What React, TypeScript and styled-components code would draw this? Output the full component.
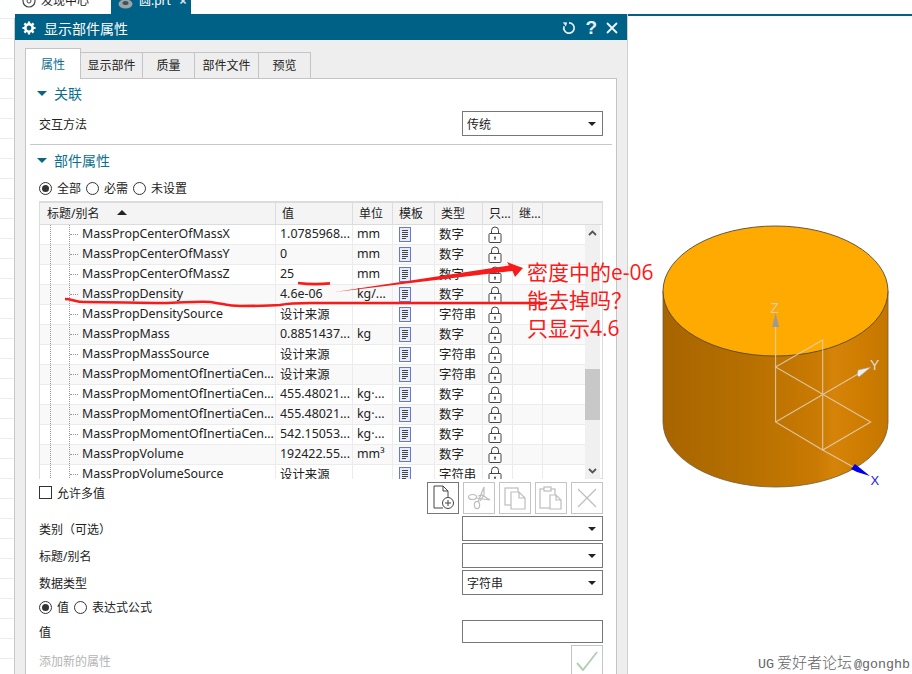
import React from 'react';
import styled, { createGlobalStyle } from 'styled-components';

const BLUE = '#006187';
const FONT = '"Noto Sans", "Noto Sans CJK SC", sans-serif';

const GlobalStyle = createGlobalStyle`
  html, body { margin: 0; padding: 0; background: #fff; }
  body { font-family: ${FONT}; font-size: 12px; color: #222; }
`;

const Page = styled.div`
  position: relative;
  width: 912px;
  height: 674px;
  overflow: hidden;
  display: flex;
  flex-direction: column;
  background: #fff;
`;

const TopBar = styled.div`
  height: 14px;
  flex: none;
  display: flex;
  align-items: flex-end;
  padding-left: 15px;
  overflow: hidden;
`;

const TopTab = styled.div<{ $active?: boolean }>`
  width: ${p => (p.$active ? 80 : 96)}px;
  height: 14px;
  flex: none;
  display: flex;
  align-items: flex-end;
  gap: ${p => (p.$active ? 6 : 5)}px;
  box-sizing: border-box;
  padding: 0 0 5px ${p => (p.$active ? 7 : 6)}px;
  font-size: 12px;
  line-height: 16px;
  color: ${p => (p.$active ? '#fff' : '#222')};
  background: ${p => (p.$active ? BLUE : '#fff')};
  white-space: nowrap;
  svg { flex: none; }
`;

const TabClose = styled.span`
  margin-left: 2px;
  font-size: 14px;
  font-weight: 700;
  color: #d8dfe4;
`;

const Workspace = styled.div`
  flex: 1;
  display: flex;
  min-height: 0;
`;

const LeftStrip = styled.div`
  width: 14px;
  flex: none;
  border-right: 1px solid #c8c8c8;
  margin-top: 4px;
  background: repeating-linear-gradient(to bottom, #ececec 0, #ececec 1px, #fff 1px, #fff 20px);
`;

const Dialog = styled.div`
  width: 612px;
  flex: none;
  background: #eee;
  border-right: 1px solid #d0d0d0;
  display: flex;
  flex-direction: column;
`;

const TitleBar = styled.div`
  height: 26px;
  flex: none;
  box-sizing: border-box;
  display: flex;
  align-items: center;
  padding: 1px 9px 0 7px;
  background: ${BLUE};
  color: #fff;
  font-size: 14px;
`;

const TitleText = styled.span`
  margin-left: 8px;
  flex: 1;
`;

const TitleTools = styled.div`
  display: flex;
  align-items: center;
  gap: 9px;
`;

const HelpMark = styled.span`
  font: 700 19px/20px "Liberation Sans", sans-serif;
  color: #e8f0f4;
`;

const DialogBody = styled.div`
  padding: 8px 10px 0;
  flex: 1;
  min-height: 0;
`;

const TabRow = styled.div`
  display: flex;
  align-items: flex-end;
  height: 31px;
  position: relative;
  z-index: 1;
`;

const Tab = styled.div<{ $active?: boolean; $w: number }>`
  width: ${p => p.$w}px;
  height: ${p => (p.$active ? 31 : 27)}px;
  box-sizing: border-box;
  display: flex;
  align-items: center;
  justify-content: center;
  border: 1px solid #c4c4c4;
  border-left-width: ${p => (p.$active ? 1 : 0)}px;
  border-bottom-width: ${p => (p.$active ? 0 : 1)}px;
  background: ${p => (p.$active ? '#fff' : '#eee')};
  color: ${p => (p.$active ? '#0a6f8e' : '#222')};
  padding-bottom: ${p => (p.$active ? 1 : 2)}px;
`;

const Panel = styled.div`
  margin-top: -1px;
  height: 640px;
  box-sizing: border-box;
  border: 1px solid #c4c4c4;
  background: #fff;
  padding: 5px 13px 0;
`;

const SectionHead = styled.div<{ $gap?: number }>`
  height: 20px;
  box-sizing: border-box;
  padding-bottom: 2px;
  margin-top: ${p => p.$gap ?? 0}px;
  display: flex;
  align-items: center;
  gap: 7px;
  font-size: 14px;
  color: #0a6f8e;
  &::before {
    content: "";
    margin-left: -2px;
    width: 0;
    height: 0;
    border-left: 5px solid transparent;
    border-right: 5px solid transparent;
    border-top: 5px solid #0a6580;
  }
`;

const FieldRow = styled.div<{ $gap: number; $h?: number }>`
  height: ${p => p.$h ?? 25}px;
  margin-top: ${p => p.$gap}px;
  display: flex;
  align-items: center;
  justify-content: space-between;
`;

const Select = styled.div`
  width: 141px;
  height: 25px;
  box-sizing: border-box;
  border: 1px solid #777;
  background: #fff;
  display: flex;
  align-items: center;
  padding: 0 6px 0 4px;
  &::after {
    content: "";
    margin-left: auto;
    width: 0;
    height: 0;
    border-left: 4px solid transparent;
    border-right: 4px solid transparent;
    border-top: 4px solid #222;
  }
`;

const TextInput = styled.div`
  width: 141px;
  height: 23px;
  box-sizing: border-box;
  border: 1px solid #777;
  background: #fff;
`;

const Divider = styled.div`
  height: 1px;
  margin: 8px -9px 0;
  background: #c8c8c8;
`;

const RadioRow = styled.div<{ $gap: number }>`
  height: 20px;
  margin-top: ${p => p.$gap}px;
  display: flex;
  align-items: center;
  gap: 5px;
`;

const Radio = styled.span<{ $on?: boolean }>`
  width: 13px;
  height: 13px;
  box-sizing: border-box;
  border-radius: 50%;
  border: 1px solid #333;
  display: inline-flex;
  align-items: center;
  justify-content: center;
  &::after {
    content: "";
    width: 7px;
    height: 7px;
    border-radius: 50%;
    background: ${p => (p.$on ? '#333' : 'transparent')};
  }
`;

const Table = styled.div`
  margin-top: 3px;
  height: 278px;
  box-sizing: border-box;
  border: 1px solid #dcdcdc;
  border-top-width: 2px;
  display: flex;
  flex-direction: column;
`;

const COLS = '236px 77px 40px 42px 48px 30px 30px';

const HeaderRow = styled.div`
  height: 22px;
  flex: none;
  box-sizing: border-box;
  display: grid;
  grid-template-columns: ${COLS} 1fr;
  border-bottom: 1px solid #dcdcdc;
  background: #f4f4f4;
`;

const HeaderCell = styled.div<{ $pad?: number }>`
  display: flex;
  align-items: center;
  gap: 18px;
  padding: 0 0 2px ${p => p.$pad ?? 6}px;
  border-right: 1px solid #dcdcdc;
  &:last-child { border-right: 0; }
`;

const SortArrow = styled.span`
  width: 0;
  height: 0;
  border-left: 5px solid transparent;
  border-right: 5px solid transparent;
  border-bottom: 5px solid #222;
`;

const TableBody = styled.div`
  height: 254px;
  flex: none;
  display: flex;
  overflow: hidden;
`;

const Rows = styled.div`
  width: 545px;
  flex: none;
`;

const Row = styled.div<{ $alt: boolean }>`
  height: 20px;
  box-sizing: border-box;
  display: grid;
  grid-template-columns: ${COLS};
  border-bottom: 1px solid #ececec;
  background: ${p => (p.$alt ? '#f9f9f9' : '#fff')};
`;

const Cell = styled.div<{ $pad?: number }>`
  padding: 0 0 2px ${p => p.$pad ?? 4}px;
  border-right: 1px solid #ececec;
  display: flex;
  align-items: center;
  overflow: hidden;
  white-space: nowrap;
  font-size: 12.4px;
`;

const IconCell = styled(Cell)`
  padding-bottom: 0;
`;

const TreeCell = styled(Cell)`
  position: relative;
  padding-left: 42px;
  &::before {
    content: "";
    position: absolute;
    left: 10px;
    top: 0;
    bottom: 0;
    width: 18px;
    border-left: 1px dotted #999;
    border-right: 1px dotted #999;
  }
  &::after {
    content: "";
    position: absolute;
    left: 30px;
    top: 9px;
    width: 8px;
    border-top: 1px dotted #999;
  }
`;

const Scrollbar = styled.div`
  width: 15px;
  flex: none;
  background: #f0f0f0;
  display: flex;
  flex-direction: column;
  align-items: center;
  padding-top: 5px;
  box-sizing: border-box;
`;

const Thumb = styled.div`
  width: 15px;
  height: 51px;
  margin-top: 133px;
  background: #c8c8c8;
`;

const ScrollDown = styled.div`
  margin-top: 48px;
  display: flex;
`;

const ActionRow = styled.div`
  height: 32px;
  margin-top: 3px;
  display: flex;
  align-items: flex-start;
`;

const CheckBox = styled.span`
  width: 13px;
  height: 13px;
  margin: 4px 5px 0 0;
  box-sizing: border-box;
  border: 1px solid #333;
  background: #fff;
`;

const CheckLabel = styled.span`
  flex: 1;
  margin-top: 2px;
`;

const Tools = styled.div`
  display: flex;
  gap: 4px;
`;

const ToolButton = styled.div<{ $enabled?: boolean }>`
  width: 32px;
  height: 32px;
  box-sizing: border-box;
  border: 1px solid ${p => (p.$enabled ? '#777' : '#c4c4c4')};
  display: flex;
  align-items: center;
  justify-content: center;
`;

const DisabledLabel = styled.span`
  color: #b4b4b4;
`;

const ApplyButton = styled(ToolButton)`
  height: 31px;
`;

const Viewport = styled.div`
  flex: 1;
  border-top: 2px solid ${BLUE};
`;

const Overlay = styled.svg`
  position: absolute;
  left: 0;
  top: 0;
  pointer-events: none;
`;

const Note = styled.div`
  position: absolute;
  left: 527px;
  top: 258px;
  font: 21px/28px "Open Sans", "Noto Sans CJK SC", sans-serif;
  color: #fb1a1a;
  white-space: nowrap;
`;

const Watermark = styled.div`
  position: absolute;
  left: 758px;
  top: 653px;
  font: 13.33px/18px "Liberation Mono", monospace;
  color: #666;
  white-space: nowrap;
`;

const WatermarkCjk = styled.span`
  margin: 0 2px 0 3px;
  font: 300 15px/18px "Noto Sans CJK SC", sans-serif;
`;

const rows = [
  ['MassPropCenterOfMassX', '1.0785968...', 'mm', '数字'],
  ['MassPropCenterOfMassY', '0', 'mm', '数字'],
  ['MassPropCenterOfMassZ', '25', 'mm', '数字'],
  ['MassPropDensity', '4.6e-06', 'kg/...', '数字'],
  ['MassPropDensitySource', '设计来源', '', '字符串'],
  ['MassPropMass', '0.8851437...', 'kg', '数字'],
  ['MassPropMassSource', '设计来源', '', '字符串'],
  ['MassPropMomentOfInertiaCen...', '设计来源', '', '字符串'],
  ['MassPropMomentOfInertiaCen...', '455.48021...', 'kg·...', '数字'],
  ['MassPropMomentOfInertiaCen...', '455.48021...', 'kg·...', '数字'],
  ['MassPropMomentOfInertiaCen...', '542.15053...', 'kg·...', '数字'],
  ['MassPropVolume', '192422.55...', 'mm³', '数字'],
  ['MassPropVolumeSource', '设计来源', '', '字符串'],
];

const DocIcon = () => (
  <svg width="12" height="15" viewBox="0 0 12 15">
    <rect x="0.5" y="0.5" width="11" height="14" fill="#e8ecff" stroke="#6277e0" />
    <path d="M3 3.5h6M3 5.5h6M3 7.5h6M3 9.5h6M3 11.5h4" stroke="#444" fill="none" />
  </svg>
);

const LockIcon = () => (
  <svg width="14" height="17" viewBox="0 0 14 17">
    <path d="M3.5 7V4.5a3.5 3.5 0 0 1 7 0V7" fill="none" stroke="#444" />
    <rect x="1" y="7.5" width="12" height="9" rx="1" fill="#fff" stroke="#444" />
    <circle cx="7" cy="11.5" r="1" fill="#444" />
    <path d="M7 12v2" stroke="#444" />
  </svg>
);

const Chevron = ({ up }: { up?: boolean }) => (
  <svg width="9" height="6" viewBox="0 0 9 6">
    <path d={up ? 'M1 5l3.5-3.5L8 5' : 'M1 1l3.5 3.5L8 1'} fill="none" stroke="#555" strokeWidth="1.8" />
  </svg>
);

const Gear = () => (
  <svg width="14" height="14" viewBox="0 0 14 14">
    <circle cx="7" cy="7" r="3.7" fill="none" stroke="#fff" strokeWidth="2.6" />
    <path d="M7 0.5v2.5M7 11v2.5M0.5 7h2.5M11 7h2.5M2.4 2.4l1.8 1.8M9.8 9.8l1.8 1.8M2.4 11.6l1.8-1.8M9.8 4.2l1.8-1.8" stroke="#fff" strokeWidth="2.2" />
  </svg>
);

const Reset = () => (
  <svg width="14" height="14" viewBox="0 0 14 14">
    <path d="M7 1.8a5.2 5.2 0 1 1-4.9 3.4" fill="none" stroke="#e8f0f4" strokeWidth="1.7" />
    <path d="M0.8 1.2l4.4 .2-1.3 4.2z" fill="#e8f0f4" />
  </svg>
);

const CloseX = () => (
  <svg width="12" height="12" viewBox="0 0 12 12">
    <path d="M1 1l10 10M11 1L1 11" stroke="#f0f5f8" strokeWidth="1.8" />
  </svg>
);

const NewIcon = () => (
  <svg width="24" height="26" viewBox="0 0 24 26">
    <path d="M12 23H3V1h9l5 5v7M12 1v5h5" fill="none" stroke="#444" />
    <circle cx="17" cy="18" r="5.5" fill="#fff" stroke="#444" />
    <path d="M17 15v6M14 18h6" stroke="#444" />
  </svg>
);

const CutIcon = () => (
  <svg width="24" height="24" viewBox="0 0 24 24">
    <g fill="none" stroke="#bdbdbd" strokeWidth="1.2">
      <ellipse cx="5.5" cy="11" rx="4" ry="2.5" />
      <ellipse cx="10" cy="19" rx="2.6" ry="3.6" />
      <path d="M11 16L17 1v8l-4 6" />
      <path d="M9 12l14 2-8-5-4 1" />
    </g>
  </svg>
);

const CopyIcon = () => (
  <svg width="24" height="24" viewBox="0 0 24 24">
    <g fill="#fff" stroke="#bdbdbd" strokeWidth="1.2">
      <rect x="2" y="2" width="13" height="17" />
      <path d="M8 6h8l6 6v11H8zM16 6v6h6" />
    </g>
  </svg>
);

const PasteIcon = () => (
  <svg width="24" height="26" viewBox="0 0 24 26">
    <g fill="#fff" stroke="#bdbdbd" strokeWidth="1.2">
      <rect x="1" y="4" width="15" height="19" />
      <rect x="5" y="2" width="7" height="4" />
      <path d="M11 10h6l5 5v9H11zM17 10v5h5" />
    </g>
  </svg>
);

const CrossIcon = () => (
  <svg width="20" height="20" viewBox="0 0 20 20">
    <path d="M1 1l18 18M19 1L1 19" stroke="#bdbdbd" strokeWidth="1.2" />
  </svg>
);

const CheckIcon = () => (
  <svg width="22" height="20" viewBox="0 0 22 20">
    <path d="M1 12l6 7L21 1" fill="none" stroke="#b4d0b4" strokeWidth="2" />
  </svg>
);

const Annotations = () => (
  <Overlay width="912" height="674" viewBox="0 0 912 674">
    <path d="M298 283c10 1.4 22 1.4 32 0.4" fill="none" stroke="#f61c1c" strokeWidth="2.6" />
    <path d="M65 299C72 299 76 302 84 302 110 302 140 303 163 303 180 303 198 301 210 302 220 303 228 306 240 306 255 306 270 306 280 305 290 303 296 303 310 303H547" fill="none" stroke="#f61c1c" strokeWidth="2.6" />
    <path d="M335 292L509 265.5 507 262 523 268 515 277 512.5 271z" fill="#f61c1c" />
  </Overlay>
);

const Model = () => (
  <Overlay width="912" height="674" viewBox="0 0 912 674">
    <defs>
      <linearGradient id="side" x1="0" x2="1" y1="0" y2="0">
        <stop offset="0" stopColor="#a86400" />
        <stop offset="0.35" stopColor="#b56f00" />
        <stop offset="0.68" stopColor="#c97a02" />
        <stop offset="0.76" stopColor="#d68409" />
        <stop offset="0.9" stopColor="#cd7c00" />
        <stop offset="1" stopColor="#c47600" />
      </linearGradient>
    </defs>
    <path d="M663 291v131a112.5 65 0 0 0 225 0V291z" fill="url(#side)" stroke="#6d5a3c" strokeWidth="0.8" />
    <ellipse cx="775.5" cy="291" rx="112.5" ry="65" fill="#ffaa00" stroke="#54483a" strokeWidth="0.9" />
    <g fill="none" stroke="#e2d2bb" strokeWidth="1.1" opacity="0.85">
      <path d="M775.6 327V422L822.7 450 870.7 422 775.6 367 822.7 340V450" />
      <path d="M775.6 422L858 374" />
      <path d="M822.7 450L855 468" />
    </g>
    <path d="M775.6 313l-3.5 14h7z" fill="#9a9a9a" />
    <path d="M871 367l-13 3-1 5 2 2z" fill="#eee" stroke="#999" strokeWidth="0.6" />
    <path d="M855 464l-4 5 6 3 13 4z" fill="#0000e6" />
    <text x="770.5" y="313" fontFamily='"Liberation Sans", sans-serif' fontSize="14" fill="#d8c8b0">Z</text>
    <text x="870" y="370" fontFamily='"Liberation Sans", sans-serif' fontSize="14" fill="#ddd">Y</text>
    <text x="870.5" y="485" fontFamily='"Liberation Sans", sans-serif' fontSize="13" fill="#1a1ae6">X</text>
  </Overlay>
);

export default function App() {
  return (
    <Page>
      <GlobalStyle />
      <TopBar>
        <TopTab>
          <svg width="15" height="14" viewBox="0 0 15 14">
            <circle cx="8" cy="6" r="6" fill="none" stroke="#444" strokeWidth="1.2" />
            <circle cx="8" cy="6" r="2" fill="none" stroke="#444" />
          </svg>
          <span>发现中心</span>
        </TopTab>
        <TopTab $active>
          <svg width="15" height="10" viewBox="0 0 15 10">
            <ellipse cx="7.5" cy="5" rx="7" ry="4.5" fill="#9aa5ab" />
            <ellipse cx="7.5" cy="4" rx="3" ry="2" fill="#44525a" />
          </svg>
          <span>圆.prt</span>
          <TabClose>×</TabClose>
        </TopTab>
      </TopBar>
      <Workspace>
        <LeftStrip />
        <Dialog>
          <TitleBar>
            <Gear />
            <TitleText>显示部件属性</TitleText>
            <TitleTools>
              <Reset />
              <HelpMark>?</HelpMark>
              <CloseX />
            </TitleTools>
          </TitleBar>
          <DialogBody>
            <TabRow>
              <Tab $active $w={56}>属性</Tab>
              <Tab $w={62}>显示部件</Tab>
              <Tab $w={52}>质量</Tab>
              <Tab $w={64}>部件文件</Tab>
              <Tab $w={52}>预览</Tab>
            </TabRow>
            <Panel>
              <SectionHead>关联</SectionHead>
              <FieldRow $gap={7}>
                <span>交互方法</span>
                <Select>传统</Select>
              </FieldRow>
              <Divider />
              <SectionHead $gap={6}>部件属性</SectionHead>
              <RadioRow $gap={7}>
                <Radio $on />
                <span>全部</span>
                <Radio />
                <span>必需</span>
                <Radio />
                <span>未设置</span>
              </RadioRow>
              <Table>
                <HeaderRow>
                  <HeaderCell $pad={7}>标题/别名<SortArrow /></HeaderCell>
                  <HeaderCell>值</HeaderCell>
                  <HeaderCell>单位</HeaderCell>
                  <HeaderCell>模板</HeaderCell>
                  <HeaderCell>类型</HeaderCell>
                  <HeaderCell>只...</HeaderCell>
                  <HeaderCell>继...</HeaderCell>
                  <HeaderCell $pad={0} />
                </HeaderRow>
                <TableBody>
                  <Rows>
                    {rows.map(([name, value, unit, type], i) => (
                      <Row key={i} $alt={i % 2 === 1}>
                        <TreeCell>{name}</TreeCell>
                        <Cell>{value}</Cell>
                        <Cell>{unit}</Cell>
                        <IconCell $pad={6}><DocIcon /></IconCell>
                        <Cell>{type}</Cell>
                        <IconCell $pad={5}><LockIcon /></IconCell>
                        <Cell />
                      </Row>
                    ))}
                  </Rows>
                  <Scrollbar>
                    <Chevron up />
                    <Thumb />
                    <ScrollDown><Chevron /></ScrollDown>
                  </Scrollbar>
                </TableBody>
              </Table>
              <ActionRow>
                <CheckBox />
                <CheckLabel>允许多值</CheckLabel>
                <Tools>
                  <ToolButton $enabled><NewIcon /></ToolButton>
                  <ToolButton><CutIcon /></ToolButton>
                  <ToolButton><CopyIcon /></ToolButton>
                  <ToolButton><PasteIcon /></ToolButton>
                  <ToolButton><CrossIcon /></ToolButton>
                </Tools>
              </ActionRow>
              <FieldRow $gap={2}>
                <span>类别（可选）</span>
                <Select />
              </FieldRow>
              <FieldRow $gap={2}>
                <span>标题/别名</span>
                <Select />
              </FieldRow>
              <FieldRow $gap={2}>
                <span>数据类型</span>
                <Select>字符串</Select>
              </FieldRow>
              <RadioRow $gap={2}>
                <Radio $on />
                <span>值</span>
                <Radio />
                <span>表达式公式</span>
              </RadioRow>
              <FieldRow $gap={3} $h={23}>
                <span>值</span>
                <TextInput />
              </FieldRow>
              <FieldRow $gap={2} $h={31}>
                <DisabledLabel>添加新的属性</DisabledLabel>
                <ApplyButton><CheckIcon /></ApplyButton>
              </FieldRow>
            </Panel>
          </DialogBody>
        </Dialog>
        <Viewport />
      </Workspace>
      <Model />
      <Annotations />
      <Note>
        密度中的e-06<br />
        能去掉吗？<br />
        只显示4.6
      </Note>
      <Watermark>UG<WatermarkCjk>爱好者论坛</WatermarkCjk>@gonghb</Watermark>
    </Page>
  );
}
